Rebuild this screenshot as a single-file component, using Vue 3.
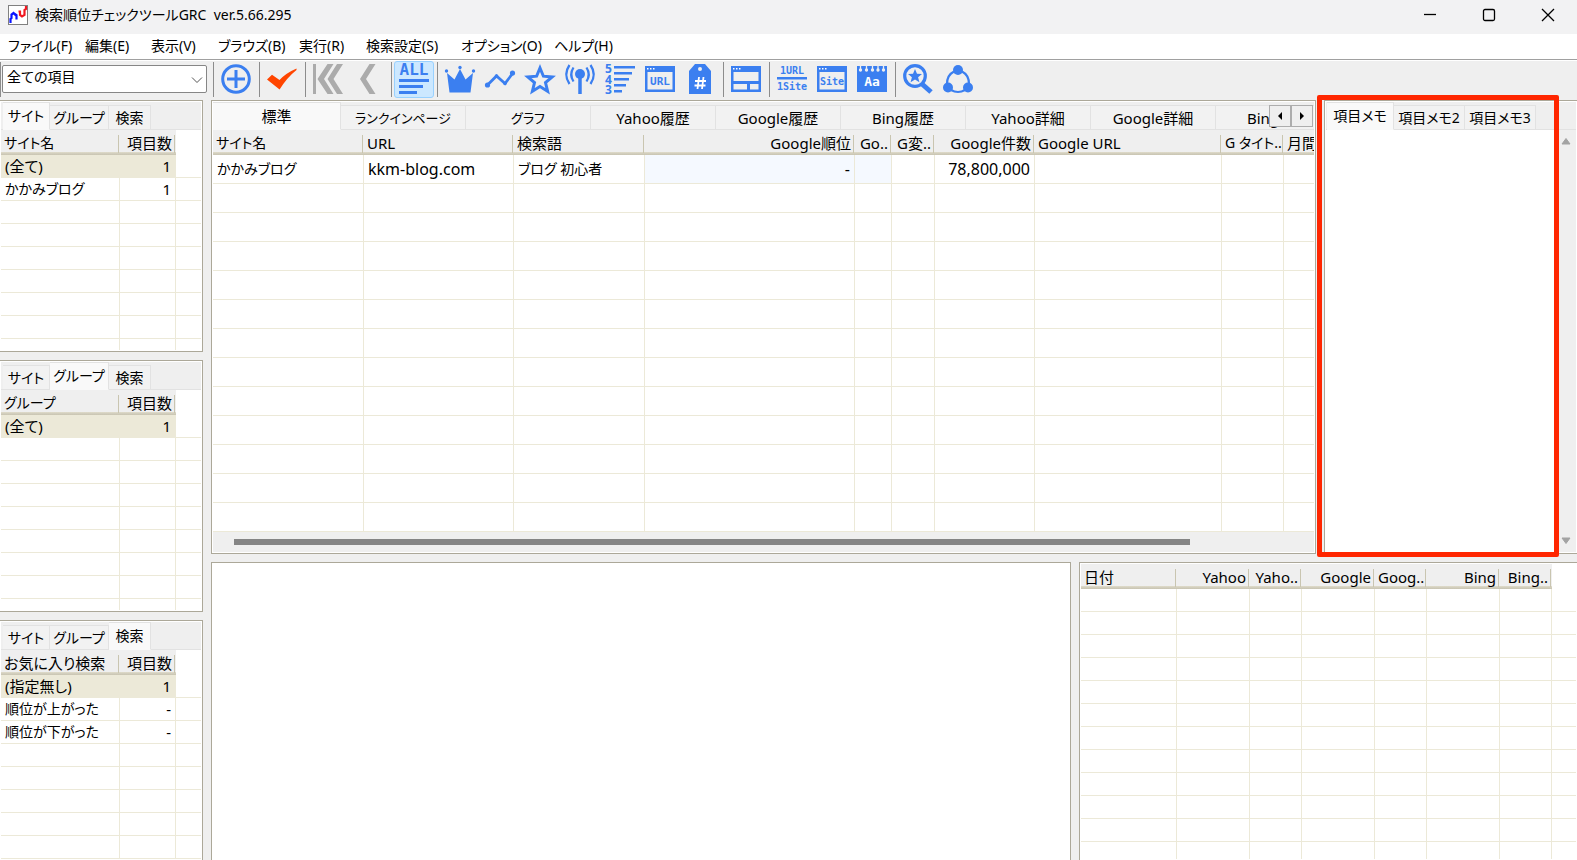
<script setup>
import { ref } from 'vue'

const menus = ['ファイル(F)', '編集(E)', '表示(V)', 'ブラウズ(B)', '実行(R)', '検索設定(S)', 'オプション(O)', 'ヘルプ(H)']

const filter = ref('全ての項目')
const memo = ref('')

const sideTabs = ['サイト', 'グループ', '検索']
const sidePanels = [
  { key: 'site', active: 0, head: 'サイト名', rows: [['(全て)', '1'], ['かかみブログ', '1']] },
  { key: 'group', active: 1, head: 'グループ', rows: [['(全て)', '1']] },
  { key: 'search', active: 2, head: 'お気に入り検索', rows: [['(指定無し)', '1'], ['順位が上がった', '-'], ['順位が下がった', '-']] }
]

const mainTabs = ['標準', 'ランクインページ', 'グラフ', 'Yahoo履歴', 'Google履歴', 'Bing履歴', 'Yahoo詳細', 'Google詳細', 'Bing詳細']
const mainCols = [
  { t: 'サイト名', c: 'c-site', v: 'かかみブログ' },
  { t: 'URL', c: 'c-url', v: 'kkm-blog.com' },
  { t: '検索語', c: 'c-word', v: 'ブログ 初心者' },
  { t: 'Google順位', c: 'c-rank', v: '-', right: true, tint: true },
  { t: 'Go..', c: 'c-go', v: '', right: true, tint: true },
  { t: 'G変..', c: 'c-diff', v: '', right: true },
  { t: 'Google件数', c: 'c-count', v: '78,800,000', right: true },
  { t: 'Google URL', c: 'c-gurl', v: '' },
  { t: 'G タイト..', c: 'c-title', v: '' },
  { t: '月間', c: 'c-rest', v: '' }
]

const memoTabs = ['項目メモ', '項目メモ2', '項目メモ3']

const historyCols = [
  { t: '日付', c: 'h-date' },
  { t: 'Yahoo', c: 'h-wide', right: true },
  { t: 'Yaho..', c: 'h-narrow', right: true },
  { t: 'Google', c: 'h-wide', right: true },
  { t: 'Goog..', c: 'h-narrow', right: true },
  { t: 'Bing', c: 'h-wide', right: true },
  { t: 'Bing..', c: 'h-narrow', right: true }
]

// Labels that hold a run of kana are set one size smaller than kanji and Latin ones.
const kana = (s) => /[ぁ-んァ-ヶー]{2,}/.test(s)
</script>

<template>
  <div class="window">
    <header class="titlebar">
      <svg class="app-icon" viewBox="0 0 20 20" aria-hidden="true">
        <rect x=".5" y=".5" width="19" height="19" fill="#fff" stroke="#808080" />
        <path d="M2.500 18v-4l1-1V9.500l2-1.500 1.500 1.500V9l1.500 1v4.500" fill="none" stroke="#0a14ff" stroke-width="2.200" />
        <path d="M10.500 6.500h1.500V10l2 1.500 2.500-1.500V5l1.500-1V1" fill="none" stroke="#f01820" stroke-width="2.200" />
      </svg>
      <h1>検索順位チェックツールGRC&nbsp; ver.5.66.295</h1>
      <div class="win-buttons">
        <button aria-label="最小化"><svg viewBox="0 0 14 14"><path d="M1 6.500h12" /></svg></button>
        <button aria-label="最大化"><svg viewBox="0 0 14 14"><rect x="1.500" y="1.500" width="11" height="11" rx="1.500" /></svg></button>
        <button aria-label="閉じる"><svg viewBox="0 0 14 14"><path d="M1 1l12 12M13 1L1 13" /></svg></button>
      </div>
    </header>

    <nav class="menubar">
      <button v-for="m in menus" :key="m">{{ m }}</button>
    </nav>

    <div class="toolbar">
      <i class="grip"></i>
      <div class="select-wrap">
        <select v-model="filter" aria-label="項目の絞り込み"><option>全ての項目</option></select>
        <svg viewBox="0 0 12 8" aria-hidden="true"><path d="M1 1.500l5 5 5-5" /></svg>
      </div>
      <i class="sep"></i>
      <button aria-label="追加">
        <svg viewBox="0 0 30 30"><g fill="none" stroke="#3b7ff0" stroke-width="3"><circle cx="15" cy="15" r="13.300" /><path d="M15 6v18M6 15h18" /></g></svg>
      </button>
      <i class="sep"></i>
      <button aria-label="実行">
        <svg viewBox="0 0 30 30"><path d="M0 15.500l5-4.800 7.500 5.300Q19 9 29.500 4.500v1.500Q20 13.500 12.600 25.500z" fill="#ff4500" /></svg>
      </button>
      <i class="sep"></i>
      <button aria-label="最初へ">
        <svg viewBox="0 0 30 30" fill="#ababab"><path d="M0 0h3v30H0zM14.500 0h6l-9.500 15 9.500 15h-6L4.500 15zM24 0h6l-9.500 15L30 30h-6l-9.500-15z" /></svg>
      </button>
      <button aria-label="前へ">
        <svg viewBox="0 0 30 30" fill="#ababab"><path d="M16.500 0h6L13 15l9.500 15h-6L7 15z" /></svg>
      </button>
      <i class="sep"></i>
      <button class="on" aria-label="すべて">
        <svg viewBox="0 0 30 30" fill="#3b7ff0"><text x="15" y="11" class="g-all">ALL</text><path d="M0 15h30v3H0zM0 21h24v3H0zM0 27h18v3H0z" /></svg>
      </button>
      <i class="sep"></i>
      <button aria-label="ランクイン">
        <svg viewBox="0 0 30 30" fill="#3b7ff0"><path d="M2 9l7.500 6.500L15 5l5.500 10.500L28 9l-2.500 19.500h-21z" /><circle cx="1.500" cy="7" r="1.700" /><circle cx="15" cy="3.500" r="1.700" /><circle cx="28.500" cy="7" r="1.700" /></svg>
      </button>
      <button aria-label="変化">
        <svg viewBox="0 0 30 30" fill="#3b7ff0"><path d="M2.500 21L11.500 12l8.500 7.500 8-10.500" fill="none" stroke="#3b7ff0" stroke-width="2.800" /><circle cx="2.500" cy="21" r="2.600" /><circle cx="11.500" cy="12" r="1.800" /><circle cx="20" cy="19.500" r="1.800" /><circle cx="27.500" cy="9" r="2.600" /></svg>
      </button>
      <button aria-label="お気に入り">
        <svg viewBox="0 0 30 30"><path d="M15 4l3.400 8.200 8.800.7-6.700 5.700 2.100 8.600L15 22.500l-7.600 4.700 2.100-8.600-6.700-5.700 8.800-.7z" fill="none" stroke="#3b7ff0" stroke-width="3" /></svg>
      </button>
      <button aria-label="監視">
        <svg viewBox="0 0 30 30" fill="none" stroke="#3b7ff0" stroke-width="2.300"><circle cx="15" cy="10" r="5" fill="#3b7ff0" stroke="none" /><path d="M15 12v18" stroke-width="3.500" /><path d="M8.500 3.500q-4.500 7 0 14M21.500 3.500q4.500 7 0 14M4.500 1q-6.500 9.500 0 19M25.500 1q6.500 9.500 0 19" /></svg>
      </button>
      <button aria-label="順位順">
        <svg viewBox="0 0 30 30" fill="#3b7ff0"><text x="3.500" y="8.500" class="g-num">5</text><text x="3.500" y="19.500" class="g-num">4</text><text x="3.500" y="30" class="g-num">3</text><path d="M9 2h21v2.500H9zM9 8h18v2.500H9zM9 14h15v2.500H9zM9 20h12v2.500H9zM9 26h8v2.500H9z" /></svg>
      </button>
      <button aria-label="URL">
        <svg viewBox="0 0 30 30" fill="#3b7ff0"><path fill-rule="evenodd" d="M0 2h30v26H0zM2.500 8v17.500h25V8z" /><path d="M2 4h1.500v1.500H2zM5 4h1.500v1.500H5zM8 4h1.500v1.500H8z" fill="#fff" /><text x="15" y="21" class="g-url">URL</text></svg>
      </button>
      <button aria-label="タグ">
        <svg viewBox="0 0 30 30"><path fill-rule="evenodd" d="M10 0h10l6 7v23H4V7zM15 3a2 2 0 100 4 2 2 0 000-4z" fill="#3b7ff0" /><path d="M14 13l-1.500 12M18.500 13L17 25M10 17h11M9.500 21.500h11" stroke="#fff" stroke-width="1.800" /></svg>
      </button>
      <i class="sep"></i>
      <button aria-label="レイアウト">
        <svg viewBox="0 0 30 30"><path fill-rule="evenodd" d="M0 2h30v26H0zM2.500 8v9h25V8zM2.500 20v5.500H16V20zM19 20v5.500h8.500V20z" fill="#3b7ff0" /><path d="M2 4h1.500v1.500H2zM5 4h1.500v1.500H5zM8 4h1.500v1.500H8z" fill="#fff" /></svg>
      </button>
      <i class="sep"></i>
      <button aria-label="1URL 1Site">
        <svg viewBox="0 0 30 30" fill="#3b7ff0"><text x="15" y="10" class="g-small">1URL</text><path d="M0 13h30v2.500H0z" /><text x="15" y="26" class="g-small">1Site</text></svg>
      </button>
      <button aria-label="Site">
        <svg viewBox="0 0 30 30" fill="#3b7ff0"><path fill-rule="evenodd" d="M0 2h30v26H0zM2.500 8v17.500h25V8z" /><path d="M2 4h1.500v1.500H2zM5 4h1.500v1.500H5zM8 4h1.500v1.500H8z" fill="#fff" /><text x="15" y="21" class="g-small">Site</text></svg>
      </button>
      <button aria-label="文字">
        <svg viewBox="0 0 30 30"><path d="M0 2h30v26H0z" fill="#3b7ff0" /><g stroke="#efefef" stroke-width="1.300" fill="#efefef"><path d="M3.500 1v5M9.500 1v5M15.500 1v5M21 1v5M26.500 1v5" /><circle cx="3.500" cy="6" r="1" /><circle cx="9.500" cy="6" r="1" /><circle cx="15.500" cy="6" r="1" /><circle cx="21" cy="6" r="1" /><circle cx="26.500" cy="6" r="1" /></g><text x="15" y="22" class="g-aa">Aa</text></svg>
      </button>
      <i class="sep"></i>
      <button aria-label="検索">
        <svg viewBox="0 0 30 30"><circle cx="12" cy="12" r="10.300" fill="none" stroke="#3b7ff0" stroke-width="3.200" /><path d="M19 20l9 8" stroke="#3b7ff0" stroke-width="5" /><path d="M12 5l2 4.800 5 .3-3.900 3.200 1.300 5-4.400-2.800-4.400 2.800 1.300-5L5 10.100l5-.3z" fill="#3b7ff0" /></svg>
      </button>
      <button aria-label="共有">
        <svg viewBox="0 0 30 30" fill="#3b7ff0"><path d="M11 7.500Q4 11 4 20M19 7.500q7 3.500 7 12.500M8 26q7 4 14 0" fill="none" stroke="#3b7ff0" stroke-width="2.200" /><circle cx="15" cy="6" r="5" /><circle cx="5" cy="23.500" r="5" /><circle cx="25" cy="23.500" r="5" /></svg>
      </button>
    </div>

    <main class="work">
      <aside class="side">
        <section v-for="p in sidePanels" :key="p.key" class="panel side-panel">
          <div class="tabs" role="tablist">
            <button v-for="(t, i) in sideTabs" :key="t" role="tab" :aria-selected="i === p.active" :class="{ active: i === p.active }">{{ t }}</button>
          </div>
          <div class="table-box">
            <table class="grid">
              <colgroup><col class="s-name"><col class="s-count"><col></colgroup>
              <thead><tr><th :class="{ kana: kana(p.head) }"><span>{{ p.head }}</span></th><th class="right"><span>項目数</span></th><td class="blank"></td></tr></thead>
              <tbody>
                <tr v-for="(r, i) in p.rows" :key="r[0]" :class="{ picked: i === 0 }"><td :class="{ kana: kana(r[0]) }">{{ r[0] }}</td><td class="right">{{ r[1] }}</td><td class="last"></td></tr>
                <tr v-for="n in 10" :key="n"><td></td><td></td><td class="last"></td></tr>
              </tbody>
            </table>
          </div>
        </section>
      </aside>

      <div class="content">
        <div class="upper">
          <section class="panel list-panel">
            <div class="tabs wide" role="tablist">
              <button v-for="(t, i) in mainTabs" :key="t" role="tab" :aria-selected="i === 0" :class="{ active: i === 0, kana: kana(t) }">{{ t }}</button>
              <div class="spin">
                <button aria-label="左へ"><svg viewBox="0 0 4 8"><path d="M4 0v8L0 4z" /></svg></button>
                <button aria-label="右へ"><svg viewBox="0 0 4 8"><path d="M0 0v8l4-4z" /></svg></button>
              </div>
            </div>
            <div class="table-box">
              <table class="grid tall">
                <colgroup><col v-for="c in mainCols" :key="c.t" :class="c.c"></colgroup>
                <thead><tr><th v-for="c in mainCols" :key="c.t" :class="{ right: c.right, kana: kana(c.t) }"><span>{{ c.t }}</span></th></tr></thead>
                <tbody>
                  <tr><td v-for="c in mainCols" :key="c.t" :class="{ right: c.right, tint: c.tint, kana: kana(c.v) }">{{ c.v }}</td></tr>
                  <tr v-for="n in 14" :key="n"><td v-for="c in mainCols" :key="c.t"></td></tr>
                </tbody>
              </table>
            </div>
            <div class="hscroll"><div class="thumb"></div></div>
          </section>

          <section class="panel memo-panel">
            <div class="tabs memo-tabs" role="tablist">
              <button v-for="(t, i) in memoTabs" :key="t" role="tab" :aria-selected="i === 0" :class="{ active: i === 0 }">{{ t }}</button>
            </div>
            <div class="memo-body">
              <textarea v-model="memo" aria-label="項目メモ"></textarea>
              <div class="vscroll">
                <svg viewBox="0 0 10 8"><path d="M5 1.500L9 7H1z" /></svg>
                <svg viewBox="0 0 10 8"><path d="M5 6.500L9 1H1z" /></svg>
              </div>
            </div>
            <div class="highlight"></div>
          </section>
        </div>

        <div class="lower">
          <section class="panel chart-panel"></section>
          <section class="panel history-panel">
            <div class="table-box">
              <table class="grid">
                <colgroup><col v-for="c in historyCols" :key="c.t" :class="c.c"><col></colgroup>
                <thead><tr><th v-for="c in historyCols" :key="c.t" :class="{ right: c.right }"><span>{{ c.t }}</span></th><td class="blank"></td></tr></thead>
                <tbody>
                  <tr v-for="n in 14" :key="n"><td v-for="c in historyCols" :key="c.t"></td><td class="last"></td></tr>
                </tbody>
              </table>
            </div>
          </section>
        </div>
      </div>
    </main>
  </div>
</template>

<style>
body { margin: 0; }
</style>

<style scoped>
* { box-sizing: border-box; }
.window {
  display: flex; flex-direction: column; height: 100vh; overflow: hidden;
  background: #efefef; color: #000;
  font: 15px/20px "Noto Sans", "Noto Sans CJK JP", sans-serif;
  font-feature-settings: "palt";
}
button, select, textarea { font: inherit; font-feature-settings: inherit; color: inherit; margin: 0; padding: 0; border: 0; background: none; }

.titlebar { flex: none; display: flex; align-items: center; height: 34px; padding: 0 0 4px 8px; background: #f2f2f3; }
.app-icon { width: 20px; height: 20px; }
.titlebar h1 { margin: 0 0 0 7px; flex: 1; font-size: 14px; font-weight: 400; white-space: nowrap; }
.win-buttons { display: flex; }
.win-buttons button { width: 59px; height: 30px; display: grid; place-items: center; }
.win-buttons svg { width: 14px; height: 14px; fill: none; stroke: #000; stroke-width: 1.300; }

.menubar {
  flex: none; display: grid; grid-template-columns: 77px 66px 67px 81px 67px 95px 93px auto; justify-content: start;
  height: 26px; padding: 0 0 1px 8px; background: #fff; border-bottom: 1px solid #a0a0a0; font-size: 14px;
}
.menubar button { text-align: left; white-space: nowrap; }

.toolbar { flex: none; display: flex; align-items: center; height: 40px; padding-bottom: 3px; border-top: 1px solid #fff; }
.grip { width: 2px; height: 35px; border-left: 1px solid #8c8c8c; }
.sep { width: 6px; height: 35px; background: linear-gradient(#8c8c8c, #8c8c8c) center / 1px 100% no-repeat; }
.select-wrap { position: relative; width: 205px; height: 28px; margin-right: 3px; }
.select-wrap select {
  width: 100%; height: 100%; padding: 0 0 4px 4px; appearance: none; background: #fff;
  border: 1px solid #868686; border-radius: 2px; font-size: 14px;
}
.select-wrap svg { position: absolute; right: 4px; top: 11px; width: 12px; height: 8px; fill: none; stroke: #555; pointer-events: none; }
.toolbar button { width: 40px; height: 37px; display: grid; place-items: center; }
.toolbar button svg { width: 30px; height: 30px; overflow: visible; }
.toolbar button.on { background: #cce8ff; border: 1px solid #99d1ff; border-radius: 3px; }
.toolbar text { font-family: "DejaVu Sans Mono", monospace; font-weight: 700; text-anchor: middle; }
.g-all { font-size: 16px; }
.toolbar text.g-num { font-family: "Noto Sans", sans-serif; font-size: 12px; }
.g-url { font-size: 11px; }
.g-small { font-size: 10px; }
.g-aa { font-size: 13px; fill: #fff; }

.work { flex: 1; min-height: 0; display: flex; gap: 8px; }
.side { flex: none; width: 203px; display: grid; grid-template-rows: 252fr 252fr 240fr; gap: 8px; }
.content { flex: 1; min-width: 0; display: grid; grid-template-rows: 454fr 298fr; gap: 8px; }
.upper, .lower { display: flex; gap: 8px; min-width: 0; min-height: 0; }
.panel { background: #fff; border: 1px solid #aca899; min-width: 0; min-height: 0; display: flex; flex-direction: column; }
.side-panel { border-left: 0; padding: 1px; }
.side-panel:last-child { border-bottom: 0; }
.list-panel { flex: 1; padding: 1px; }
.memo-panel { flex: none; width: 253px; position: relative; border-right: 0; padding: 1px; }
.chart-panel { flex: 1; border-bottom: 0; }
.history-panel { flex: none; width: 498px; border-right: 0; border-bottom: 0; padding: 1px; }

.tabs { position: relative; flex: none; display: flex; align-items: flex-end; height: 28px; padding-left: 2px; background: #efefef; overflow: hidden; box-shadow: inset 0 -1px #e2e2e2; }
.tabs > button {
  flex: none; height: 25px; border: 1px solid #e2e2e2; border-left: 0; background: #f2f2f2; white-space: nowrap;
  font-size: 14px; line-height: 22px; width: 59px;
}
.tabs > button.active { height: 28px; background: #f9f9f9; border-bottom-color: #f9f9f9; }
.side-panel .tabs > button:first-child { width: 47px; }
.side-panel .tabs > button:nth-child(3) { width: 42px; }
.tabs.wide > button { width: 125px; font-size: 15px; }
.tabs.wide > button.kana { font-size: 13px; }
.tabs.wide { padding-left: 0; }
.tabs.wide > button.active { width: 128px; }
.tabs.memo-tabs { padding-left: 1px; }
.memo-tabs > button { width: 71px; }
.memo-tabs > button.active { width: 67px; }
.spin { position: absolute; right: 1px; top: 3px; display: flex; background: #efefef; }
.spin button { width: 22px; height: 22px; border: 1px solid #adadad; display: grid; place-items: center; }
.spin svg { width: 4px; height: 8px; }

.table-box { flex: 1; min-height: 0; overflow: hidden; }
.grid { width: 100%; table-layout: fixed; border-collapse: separate; border-spacing: 0; }
.grid th, .grid .blank { height: 25px; padding: 0; }
.grid th { padding: 3px 1px 0 0; font-weight: 400; text-align: left; vertical-align: top; background: linear-gradient(#e0dccb, #d2cebd, #c8c4b2) bottom / 100% 3px no-repeat #efefef; }
.grid th span { display: block; height: 20px; padding: 0 3px; line-height: 20px; background: linear-gradient(#c9c5b0, #c9c5b0) right bottom / 1px 18px no-repeat; white-space: nowrap; }
.grid tbody td { height: 23px; padding: 0 4px; line-height: 20px; border-right: 1px solid #ece9d8; border-bottom: 1px solid #ece9d8; white-space: nowrap; overflow: hidden; }
.grid tbody td.last { border-right: 0; }
.grid .right { text-align: right; }
.tall tbody td { height: 29px; font-size: 16px; }
.grid th.kana, .grid tbody td.kana { font-size: 14px; }
.tall tbody td.tint { background: #f5f9ff; }
.tall tbody td:last-child { border-right: 0; }
.tall th:last-child span { background: none; }
.picked td:not(.last) { background: #ece9d8; }
.s-name { width: 119px; }
.s-count { width: 56px; }
.c-site { width: 151px; } .c-url { width: 150px; } .c-word { width: 131px; } .c-rank { width: 210px; }
.c-go { width: 37px; } .c-diff { width: 43px; } .c-count { width: 100px; } .c-gurl { width: 187px; } .c-title { width: 62px; }
.h-date { width: 96px; } .h-wide { width: 73px; } .h-narrow { width: 52px; }

.hscroll { flex: none; height: 20px; padding: 7px 124px 0 21px; background: #efefef; }
.thumb { height: 6px; background: #858585; }

.memo-body { flex: 1; min-height: 0; display: flex; }
.memo-body textarea { flex: 1; min-width: 0; resize: none; outline: 0; padding: 4px; overflow: hidden; background: #fff; }
.vscroll { width: 20px; display: flex; flex-direction: column; justify-content: space-between; align-items: center; padding: 7px 0; background: #efefef; }
.vscroll svg { width: 10px; height: 8px; fill: #a3a3a3; stroke: #a3a3a3; stroke-linejoin: round; }
.highlight { position: absolute; left: -8px; right: 18px; top: -6px; bottom: -4px; border: 5px solid #ff2600; border-radius: 2px; pointer-events: none; }
</style>
